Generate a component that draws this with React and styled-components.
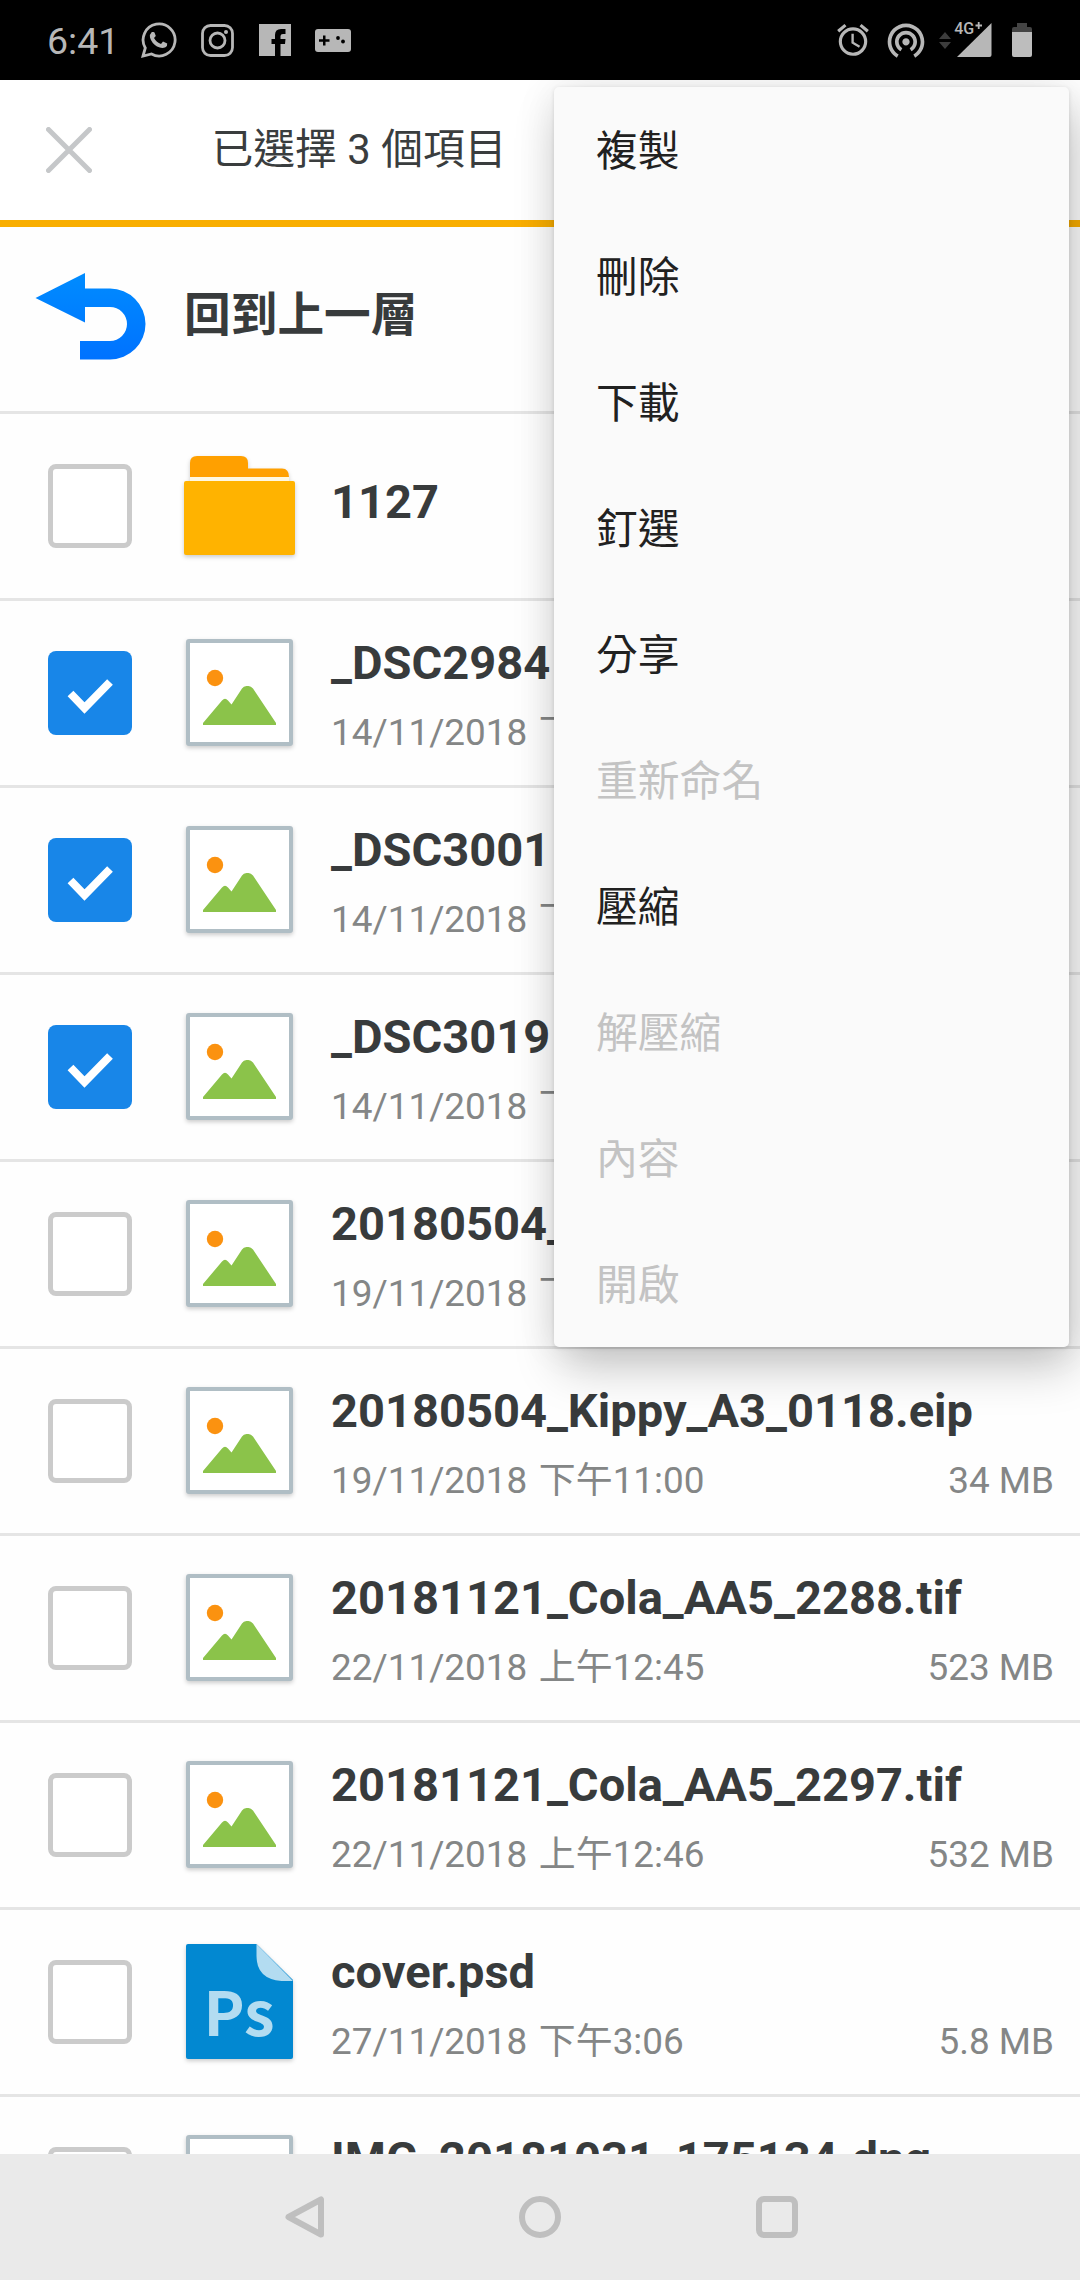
import { useState } from "react";
import styled, { createGlobalStyle } from "styled-components";
import { MdAccessAlarm, MdWifiTethering } from "react-icons/md";

const GlobalStyle = createGlobalStyle`
    *{
        box-sizing:border-box;
    }
    body{
        margin:0;
        background:#fefefe;
        font-family: Roboto, "Noto Sans CJK TC", sans-serif;
        -webkit-font-smoothing: antialiased;
    }
    svg{
        display:block;
        flex-shrink:0;
    }
`
const Screen = styled("div")`
    position:relative;
    display:flex;
    flex-direction:column;
    width:1080px;
    height:2280px;
    overflow:hidden;
`

/* status bar */
const StatusBar = styled("header")`
    position:relative;
    z-index:2;
    display:flex;
    justify-content:space-between;
    height:80px;
    padding:0 48px 0 47px;
    background:#000;
    color:#b7b7b7;
`
const StatusGroup = styled("div")`
    display:flex;
    align-items:center;
`
const Clock = styled("span")`
    width:90px;
    padding-top:3px;
    font-size:37.5px;
    line-height:77px;
`
const StatusIcon = styled("span")`
    display:flex;
    justify-content:center;
    width:${props => props.$width}px;
    margin-left:${props => props.$gap || 0}px;
`

/* title bar */
const TitleBar = styled("div")`
    display:flex;
    align-items:center;
    flex-shrink:0;
    height:147px;
    padding:0 46px;
    background:#fff;
    border-bottom:7px solid #f9ae00;
`
const CloseButton = styled("button")`
    width:46px;
    height:46px;
    padding:0;
    border:0;
    background:none;
`
const Title = styled("h1")`
    margin:0 0 0 119.5px;
    font-size:41.8px;
    font-weight:400;
    line-height:60px;
    color:#3a3d3e;
`

/* file list */
const List = styled("ul")`
    flex:1;
    min-height:0;
    margin:0;
    padding:0;
    overflow:hidden;
    list-style:none;
`
const Row = styled("li")`
    display:flex;
    align-items:center;
    height:187px;
    padding:0 26px 0 48px;
    border-bottom:3px solid #e5e5e5;
`
const BackRow = styled(Row)`
    padding-left:35px;
    padding-bottom:5px;
`
const BackLabel = styled("span")`
    margin:0 0 4px 38px;
    font-size:46.7px;
    font-weight:700;
    line-height:60px;
    color:#383b3c;
`
const CheckBox = styled("button")`
    display:flex;
    flex-shrink:0;
    width:84px;
    height:84px;
    padding:0;
    border:${props => props.$checked ? "0" : "5px solid #cbcbcb"};
    border-radius:8px;
    background:${props => props.$checked ? "#1886e8" : "#fff"};
`
const Thumb = styled("div")`
    display:flex;
    justify-content:center;
    width:111px;
    margin:0 36px 2px 52px;
    filter: drop-shadow(0 2px 2px rgba(0,0,0,0.2));
`
const Info = styled("div")`
    flex:1;
    height:184px;
    padding-top:${props => props.$folder ? 58 : 32}px;
`
const Name = styled("p")`
    margin:0;
    font-size:47.05px;
    font-weight:700;
    line-height:60px;
    white-space:nowrap;
    color:#383b3c;
`
const Meta = styled("div")`
    display:flex;
    justify-content:space-between;
    margin-top:12px;
    font-size:36.9px;
    line-height:56px;
    white-space:nowrap;
    color:#848686;
`
const FileDate = styled("span")`
    word-spacing:2.4px;
`

/* popup menu */
const Menu = styled("ul")`
    position:absolute;
    z-index:1;
    top:87px;
    left:554px;
    width:515px;
    margin:0;
    padding:0;
    border-radius:5px;
    background:#fafafa;
    box-shadow: 0 1px 4px rgba(0,0,0,0.12), 6px 22px 48px -2px rgba(0,0,0,0.22), 0 0 40px rgba(0,0,0,0.08);
    list-style:none;
`
const MenuItem = styled("li")`
    height:126px;
    padding:4px 0 0 42px;
    font-size:41.8px;
    line-height:122px;
    color:${props => props.$disabled ? "#c3c3c3" : "#212121"};
`

/* navigation bar */
const NavBar = styled("nav")`
    display:flex;
    align-items:center;
    justify-content:center;
    gap:195px;
    flex-shrink:0;
    height:126px;
    background:#eaeaea;
`

const menuItems = [
    { label: "複製" },
    { label: "刪除" },
    { label: "下載" },
    { label: "釘選" },
    { label: "分享" },
    { label: "重新命名", disabled: true },
    { label: "壓縮" },
    { label: "解壓縮", disabled: true },
    { label: "內容", disabled: true },
    { label: "開啟", disabled: true },
];

const files = [
    { type: "folder", name: "1127" },
    { type: "image", name: "_DSC2984", date: "14/11/2018 下" },
    { type: "image", name: "_DSC3001", date: "14/11/2018 下" },
    { type: "image", name: "_DSC3019", date: "14/11/2018 下" },
    { type: "image", name: "20180504_", date: "19/11/2018 下" },
    { type: "image", name: "20180504_Kippy_A3_0118.eip", date: "19/11/2018 下午11:00", size: "34 MB" },
    { type: "image", name: "20181121_Cola_AA5_2288.tif", date: "22/11/2018 上午12:45", size: "523 MB" },
    { type: "image", name: "20181121_Cola_AA5_2297.tif", date: "22/11/2018 上午12:46", size: "532 MB" },
    { type: "psd", name: "cover.psd", date: "27/11/2018 下午3:06", size: "5.8 MB" },
    { type: "image", name: "IMG_20181031_175134.dng" },
];

function FolderIcon() {
    return (
        <svg width="111" height="99" viewBox="0 0 111 99">
            <path d="M6 21V7q0-7 7-7h44q7 0 7 7v5.500h34q7 0 7 8.500z" fill="#ffa000"/>
            <path d="M6 21h99v5H6z" fill="#fff8e1"/>
            <rect y="25" width="111" height="74" rx="2" fill="#ffb300"/>
        </svg>
    );
}

function ImageIcon() {
    return (
        <svg width="107" height="107" viewBox="0 0 107 107">
            <rect x="2" y="2" width="103" height="103" rx="1" fill="#fff" stroke="#b0bec5" strokeWidth="4"/>
            <circle cx="29" cy="39" r="8.200" fill="#fb9210"/>
            <path d="M17 84L36 61.500Q39 58 42 61.500L45.500 65.500L56 49.500Q57.500 47 60.500 47H62.500Q65 47 67 49.500L90 84V86H17z" fill="#8bc34a"/>
        </svg>
    );
}

function PsdIcon() {
    return (
        <svg width="107" height="115" viewBox="0 0 107 115">
            <path d="M2 0H70.500L107 36V113q0 2-2 2H2q-2 0-2-2V2q0-2 2-2z" fill="#0288d1"/>
            <path d="M70.500 0L107 37H95.500Q70.500 35 70.500 12z" fill="#b3dcf1"/>
            <text x="17.500" y="92" fontFamily="Noto Sans CJK TC" fontWeight="700" fontSize="61" textLength="71" lengthAdjust="spacingAndGlyphs" fill="#b3dcf1">Ps</text>
        </svg>
    );
}

const icons = { folder: FolderIcon, image: ImageIcon, psd: PsdIcon };

function FileRow({ file, checked, onToggle }) {
    const Icon = icons[file.type];
    return (
        <Row>
            <CheckBox $checked={checked} onClick={onToggle}>
                {checked && (
                    <svg width="84" height="84" viewBox="0 0 84 84">
                        <path d="M22.500 42.500L36.500 57L62 31" fill="none" stroke="#fff" strokeWidth="8"/>
                    </svg>
                )}
            </CheckBox>
            <Thumb><Icon/></Thumb>
            <Info $folder={file.type === "folder"}>
                <Name>{file.name}</Name>
                {file.date && (
                    <Meta>
                        <FileDate>{file.date}</FileDate>
                        <span>{file.size}</span>
                    </Meta>
                )}
            </Info>
        </Row>
    );
}

function Status() {
    return (
        <StatusBar>
            <StatusGroup>
                <Clock>6:41</Clock>
                <StatusIcon $width={36} $gap={4}>
                    <svg width="36" height="36" viewBox="0 0 36 36">
                        <path d="M2 34L4.300 26A16 16 0 1 1 10.500 32z" fill="none" stroke="currentColor" strokeWidth="2.800"/>
                        <path d="M12.500 10H10.800Q8.300 12.500 9 15.500Q10.500 21 16 24.500Q21 27 24.500 25.200Q26.500 24 26.200 21.500L22 19.500L20 22Q15.500 20.500 13 16L14.800 14L13.500 10.500z" fill="currentColor"/>
                    </svg>
                </StatusIcon>
                <StatusIcon $width={33} $gap={24}>
                    <svg width="33" height="33" viewBox="0 0 33 33" fill="none" stroke="currentColor" strokeWidth="2.800">
                        <rect x="1.500" y="1.500" width="30" height="30" rx="8"/>
                        <circle cx="16.500" cy="16.500" r="7.500"/>
                        <circle cx="25" cy="8" r="2" fill="currentColor" stroke="none"/>
                    </svg>
                </StatusIcon>
                <StatusIcon $width={32} $gap={25}>
                    <svg width="32" height="32" viewBox="0 0 32 32" fill="currentColor">
                        <path d="M0 0H32V32H21.500V20H26L26.500 15H21.500V12Q21.500 10 24 10H26.500V5H22Q16 5 16 11V15H12.500V20H16V32H0z"/>
                    </svg>
                </StatusIcon>
                <StatusIcon $width={36} $gap={24}>
                    <svg width="36" height="23" viewBox="0 0 36 23">
                        <rect width="36" height="23" rx="3" fill="currentColor"/>
                        <path d="M4 11.500H14.500M9.250 6.500V16.500" stroke="#000" strokeWidth="2.500"/>
                        <circle cx="23" cy="9" r="1.900" fill="#000"/>
                        <circle cx="28" cy="12.500" r="1.900" fill="#000"/>
                    </svg>
                </StatusIcon>
            </StatusGroup>
            <StatusGroup>
                <StatusIcon $width={38}><MdAccessAlarm size={38}/></StatusIcon>
                <StatusIcon $width={44} $gap={12}><MdWifiTethering size={44}/></StatusIcon>
                <StatusIcon $width={12} $gap={11}>
                    <svg width="12" height="17" viewBox="0 0 12 17" fill="#3c3c3c">
                        <path d="M6 0L12 7H0zM6 17L0 10H12z"/>
                    </svg>
                </StatusIcon>
                <StatusIcon $width={38} $gap={3}>
                    <svg width="38" height="46" viewBox="-1 0 38 46" fill="currentColor">
                        <path d="M36.500 6V38q0 2-2 2H2z"/>
                        <text x="-0.800" y="17" fontFamily="Roboto" fontWeight="500" fontSize="16" stroke="#000" strokeWidth="2.500" paintOrder="stroke">4G</text>
                        <path d="M20.500 8.500H27M23.700 5V12" stroke="currentColor" strokeWidth="1.800"/>
                    </svg>
                </StatusIcon>
                <StatusIcon $width={20} $gap={20}>
                    <svg width="20" height="34" viewBox="0 0 20 34">
                        <path d="M5 0H15V4H18q2 0 2 2V10H0V6q0-2 2-2H5z" fill="#444"/>
                        <path d="M0 9H20V32q0 2-2 2H2q-2 0-2-2z" fill="#bdbdbd"/>
                    </svg>
                </StatusIcon>
            </StatusGroup>
        </StatusBar>
    );
}

export default function App() {
    const [selected,setSelected] = useState([1,2,3]);
    const toggle = (index) => {
        setSelected(selected.includes(index) ? selected.filter(i => i !== index) : [...selected,index]);
    };
    return(
        <Screen lang="zh-Hant">
            <GlobalStyle/>
            <Status/>
            <TitleBar>
                <CloseButton>
                    <svg width="46" height="46" viewBox="0 0 46 46">
                        <path d="M2.500 2.500L43.500 43.500M43.500 2.500L2.500 43.500" stroke="#c5c7c9" strokeWidth="5" strokeLinecap="round"/>
                    </svg>
                </CloseButton>
                <Title>已選擇 {selected.length} 個項目</Title>
            </TitleBar>
            <List>
                <BackRow>
                    <svg width="111" height="87" viewBox="0 0 111 87">
                        <defs>
                            <linearGradient id="back" x1="0" y1="0" x2="0" y2="1">
                                <stop offset="0" stopColor="#008cff"/>
                                <stop offset="1" stopColor="#0072ff"/>
                            </linearGradient>
                        </defs>
                        <path d="M0.500 25L50 0V15.500H75A35.300 35.300 0 0 1 75 86.500H45V68H75A17 17 0 0 0 75 34H50V49.500z" fill="url(#back)"/>
                    </svg>
                    <BackLabel>回到上一層</BackLabel>
                </BackRow>
                {files.map((file,index) => (
                    <FileRow
                        key={index}
                        file={file}
                        checked={selected.includes(index)}
                        onToggle={() => toggle(index)}
                    />
                ))}
            </List>
            <NavBar>
                <svg width="42" height="42" viewBox="0 0 42 42" fill="none" stroke="#bfbfbf" strokeWidth="6" strokeLinejoin="round">
                    <path d="M39 3.500V38.500L6.500 21z"/>
                </svg>
                <svg width="42" height="42" viewBox="0 0 42 42" fill="none" stroke="#bfbfbf" strokeWidth="6">
                    <circle cx="21" cy="21" r="18"/>
                </svg>
                <svg width="42" height="42" viewBox="0 0 42 42" fill="none" stroke="#bfbfbf" strokeWidth="6">
                    <rect x="3" y="3" width="36" height="36" rx="5"/>
                </svg>
            </NavBar>
            <Menu>
                {menuItems.map(item => (
                    <MenuItem key={item.label} $disabled={item.disabled}>{item.label}</MenuItem>
                ))}
            </Menu>
        </Screen>
    );
}
